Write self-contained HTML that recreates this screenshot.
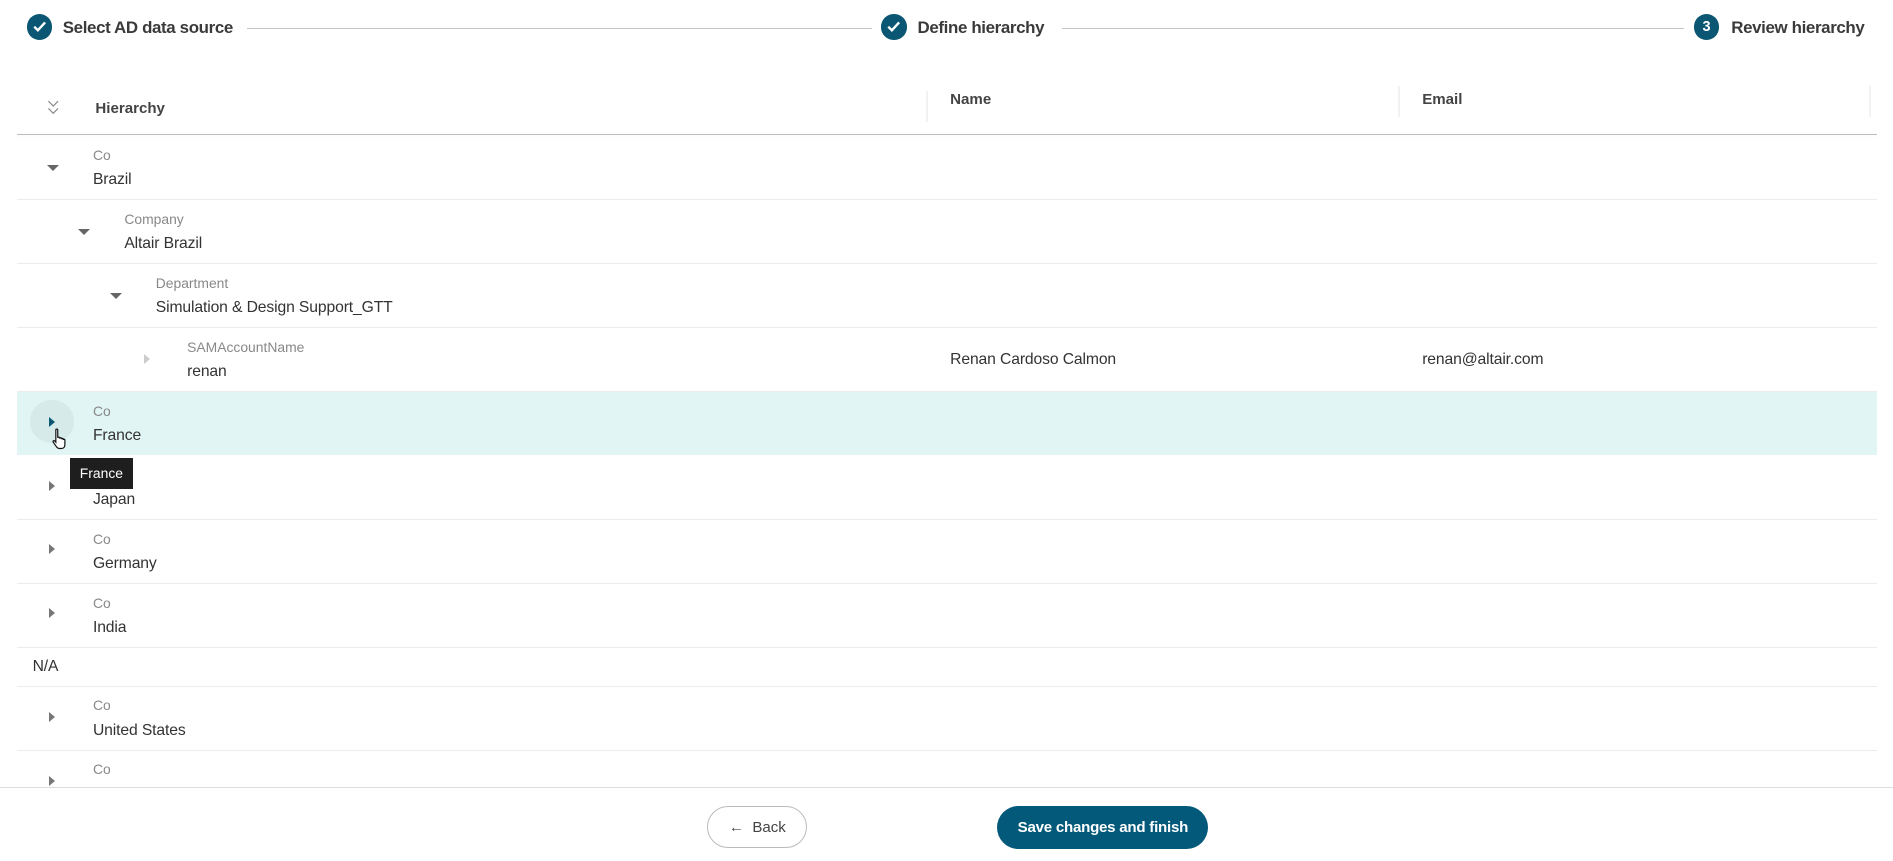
<!DOCTYPE html>
<html><head><meta charset="utf-8"><style>
html,body{margin:0;padding:0;background:#fff;overflow:hidden}
body{zoom:1.2073;width:1568px;height:713px;position:relative;font-family:"Liberation Sans",sans-serif;color:#333}
.a{position:absolute;white-space:nowrap}
.circ{position:absolute;width:21px;height:21px;border-radius:50%;background:#0a5673;color:#fff;font-size:12px;font-weight:bold;text-align:center;line-height:22px}
.step{font-size:14px;font-weight:bold;color:#3a3a3a;letter-spacing:-0.3px}
.line{position:absolute;height:1px;background:#c4c4c4;top:23px}
.sep{position:absolute;left:14px;width:1541px;height:1px;background:#ececec}
.lab{font-size:11.5px;color:#888}
.val{font-size:13px;color:#333;letter-spacing:-0.1px}
.hd{font-size:12.5px;font-weight:bold;color:#444}
.car{position:absolute;width:0;height:0}
.down{border-left:5px solid transparent;border-right:5px solid transparent;border-top:5px solid #666}
.right{border-top:4.5px solid transparent;border-bottom:4.5px solid transparent;border-left:5px solid #777}
</style></head><body>
<div class="circ" style="left:22px;top:12px"><svg width="21" height="21" viewBox="0 0 21 21"><path d="M6 10.5l3 3 6-6.5" stroke="#fff" stroke-width="2" fill="none"/></svg></div>
<div class="a step" style="left:52px;top:15px">Select AD data source</div>
<div class="line" style="left:205px;width:517px"></div>
<div class="circ" style="left:730px;top:12px"><svg width="21" height="21" viewBox="0 0 21 21"><path d="M6 10.5l3 3 6-6.5" stroke="#fff" stroke-width="2" fill="none"/></svg></div>
<div class="a step" style="left:760px;top:15px">Define hierarchy</div>
<div class="line" style="left:880px;width:515px"></div>
<div class="circ" style="left:1403px;top:12px">3</div>
<div class="a step" style="left:1434px;top:15px">Review hierarchy</div>

<svg class="a" style="left:38px;top:83px" width="12" height="13" viewBox="0 0 12 13"><path d="M2 1l4 4 4-4M2 7l4 4 4-4" stroke="#888" stroke-width="1" fill="none"/></svg>
<div class="a hd" style="left:79px;top:83px">Hierarchy</div>
<div class="a hd" style="left:787px;top:75px">Name</div>
<div class="a hd" style="left:1178px;top:75px">Email</div>
<div class="a" style="left:767px;top:75px;width:2px;height:26px;background:#f2f2f2"></div>
<div class="a" style="left:1158px;top:71px;width:2px;height:26px;background:#f2f2f2"></div>
<div class="a" style="left:1548px;top:71px;width:2px;height:26px;background:#f2f2f2"></div>
<div class="a" style="left:14px;top:111px;width:1541px;height:1px;background:#bbb;box-shadow:0 2px 4px rgba(0,0,0,0.06)"></div>

<div class="a" style="left:14px;top:324px;width:1541px;height:53px;background:#e1f5f4"></div>
<div class="a" style="left:25px;top:331px;width:36px;height:36px;border-radius:50%;background:#d6eaea"></div>

<div class="sep" style="top:165px"></div><div class="sep" style="top:218px"></div><div class="sep" style="top:271px"></div><div class="sep" style="top:324px"></div><div class="sep" style="top:430px"></div><div class="sep" style="top:483px"></div><div class="sep" style="top:536px"></div><div class="sep" style="top:568px"></div><div class="sep" style="top:621px"></div>

<div class="car down" style="left:39px;top:137px"></div>
<div class="a lab" style="left:77px;top:122px">Co</div><div class="a val" style="left:77px;top:142px">Brazil</div>
<div class="car down" style="left:65px;top:190px"></div>
<div class="a lab" style="left:103px;top:175px">Company</div><div class="a val" style="left:103px;top:195px">Altair Brazil</div>
<div class="car down" style="left:91px;top:243px"></div>
<div class="a lab" style="left:129px;top:228px">Department</div><div class="a val" style="left:129px;top:248px">Simulation &amp; Design Support_GTT</div>
<div class="car right" style="left:119px;top:293px;border-left-color:#ccc"></div>
<div class="a lab" style="left:155px;top:281px">SAMAccountName</div><div class="a val" style="left:155px;top:301px">renan</div>
<div class="a val" style="left:787px;top:291px">Renan Cardoso Calmon</div>
<div class="a val" style="left:1178px;top:291px">renan@altair.com</div>

<div class="car right" style="left:41px;top:345px;border-left-color:#0a5673"></div>
<div class="a lab" style="left:77px;top:334px">Co</div><div class="a val" style="left:77px;top:354px">France</div>
<div class="car right" style="left:41px;top:398px"></div>
<div class="a val" style="left:77px;top:407px">Japan</div>
<div class="car right" style="left:41px;top:451px"></div>
<div class="a lab" style="left:77px;top:440px">Co</div><div class="a val" style="left:77px;top:460px">Germany</div>
<div class="car right" style="left:41px;top:504px"></div>
<div class="a lab" style="left:77px;top:493px">Co</div><div class="a val" style="left:77px;top:513px">India</div>
<div class="a val" style="left:27px;top:545px">N/A</div>
<div class="car right" style="left:41px;top:590px"></div>
<div class="a lab" style="left:77px;top:577px">Co</div><div class="a val" style="left:77px;top:598px">United States</div>
<div class="car right" style="left:41px;top:643px"></div>
<div class="a lab" style="left:77px;top:630px">Co</div>

<div class="a" style="left:58px;top:379px;width:52px;height:26px;background:#1e1e1e;color:#fff;font-size:11.5px;line-height:26px;text-align:center">France</div>
<svg class="a" style="left:42px;top:354px" width="16" height="20" viewBox="0 0 16 20"><path d="M4 2.5c0-1 1.6-1 1.6 0V9c0-.9 1.5-.9 1.5 0v.6c0-.9 1.5-.9 1.5 0v.5c0-.9 1.5-.9 1.5 0v.7c0-.9 1.4-.9 1.4 0v4c0 1.7-1 3-3 3H7c-1.2 0-2-.7-2.6-1.6L1.8 12.5c-.5-.9.6-1.6 1.3-.9L4 12.6z" fill="#fff" stroke="#111" stroke-width="1"/></svg>

<div class="a" style="left:0;top:652px;width:1568px;height:1px;background:#ddd"></div>
<div class="a" style="left:586px;top:668px;width:81px;height:33px;border:1px solid #bbb;border-radius:18px;font-size:12.5px;line-height:34px;text-align:center;color:#444">&#8592;&nbsp; Back</div>
<div class="a" style="left:826px;top:668px;width:175px;height:35px;background:#03597a;border-radius:18px;color:#fff;font-size:12.5px;font-weight:bold;line-height:36px;text-align:center;letter-spacing:-0.2px">Save changes and finish</div>
</body></html>
